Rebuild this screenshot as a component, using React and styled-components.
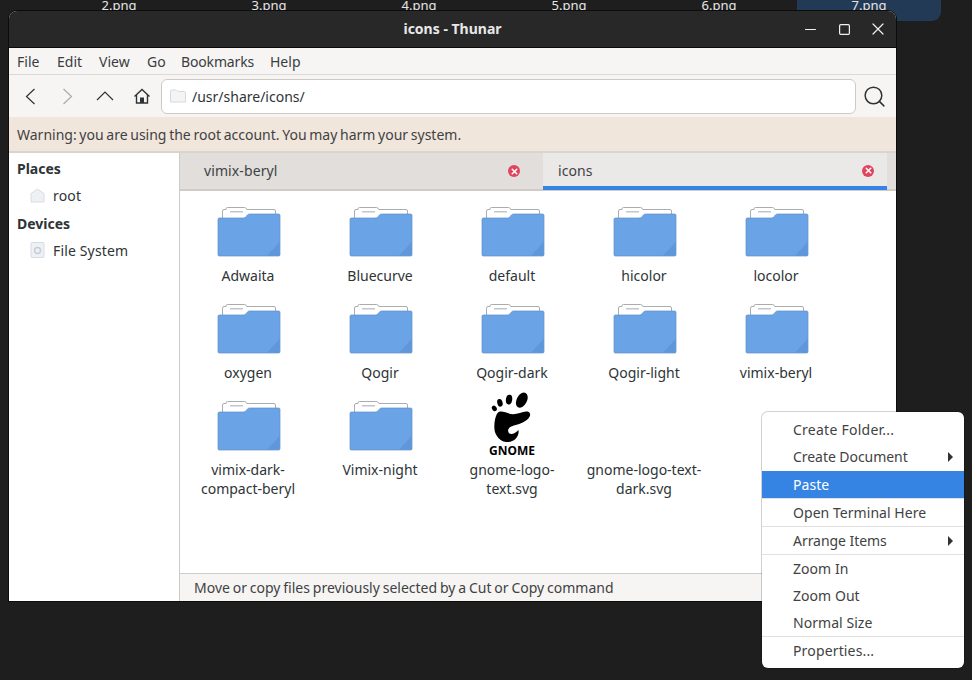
import React from "react";
import styled, { createGlobalStyle } from "styled-components";
import { Search, X, Minus, Square } from "lucide-react";

const Global = createGlobalStyle`
  html, body { margin: 0; padding: 0; background: #1e1e1e; width: 972px; height: 680px; overflow: hidden; }
  body { font-family: "Noto Sans", sans-serif; font-size: 14px; color: #2e3436; }
  * { box-sizing: border-box; }
`;

const Desktop = styled.div`
  position: relative; width: 972px; height: 680px; background: #1e1e1e; overflow: hidden;
`;
const Strip = styled.div`
  display: grid; grid-template-columns: repeat(6, 150px); margin-left: 44px; height: 11px;
`;
const StripLabel = styled.div`
  font-size: 13px; line-height: 16px; text-align: center; color: #e6e6e6; margin-top: -3px; height: 14px; overflow: hidden; position: relative; z-index: 1;
`;
const SelectedTile = styled.div`
  position: absolute; left: 797px; top: -20px; width: 144px; height: 41px; background: #223a56; border-radius: 9px;
`;
const Window = styled.div`
  position: relative; z-index: 2; margin-left: 9px; width: 887px; height: 590px; display: flex; flex-direction: column;
  border-radius: 8px 8px 0 0; overflow: hidden; background: #f6f5f4; box-shadow: 0 0 0 1px #0c0c0c;
`;
const TitleBar = styled.div`
  height: 37px; flex: none; background: #282828; border-bottom: 1px solid #0a0a0a; display: flex; align-items: center; justify-content: center; position: relative; padding-bottom: 2px;
`;
const Title = styled.div`
  color: #e8e8e8; font-weight: 700; font-size: 14px;
`;
const WinControls = styled.div`
  position: absolute; right: 8px; top: 8px; display: flex; gap: 14px; color: #f0f0f0; align-items: center;
`;
const WinBtn = styled.div`
  width: 20px; height: 20px; display: flex; align-items: center; justify-content: center;
`;
const MenuBar = styled.div`
  height: 27px; flex: none; display: flex; align-items: center; padding-left: 8px; background: #f6f5f4; border-bottom: 1px solid #dcdad7; font-size: 14px; color: #3a3d3f;
`;
const MenuLabel = styled.span`
  flex: none; width: ${p => p.$w}px; letter-spacing: ${p => p.$tight ? "-0.15px" : "0"};
`;
const Toolbar = styled.div`
  height: 42px; flex: none; display: flex; align-items: center; background: #f6f5f4; padding-left: 3px;
`;
const ToolBtn = styled.div`
  width: 37px; height: 24px; display: flex; align-items: center; justify-content: center; flex: none;
`;
const Path = styled.div`
  flex: none; width: 695px; height: 35px; margin-left: 1px; background: #fff; border: 1px solid #cdc9c5; border-radius: 6px; display: flex; align-items: center; gap: 6px; padding-left: 8px; font-size: 14px; color: #2e3436;
`;
const SearchBtn = styled.div`
  flex: 1; display: flex; align-items: center; justify-content: center; color: #2e3436; padding-right: 4px;
`;
const Warning = styled.div`
  height: 36px; flex: none; background: #f1e6db; border-bottom: 2px solid #d8d4cf; display: flex; align-items: center; padding-left: 8px; font-size: 14px; color: #3f4243; word-spacing: -0.95px;
`;
const Body = styled.div`
  flex: 1; display: flex; min-height: 0; background: #fff;
`;
const Sidebar = styled.div`
  width: 171px; flex: none; border-right: 1px solid #cfccc8; background: #fff; padding: 6px 8px; font-size: 14px;
`;
const SideHead = styled.div`
  font-weight: 700; height: 20px; line-height: 20px; color: #2e3436;
`;
const SideRow = styled.div`
  height: 35px; display: flex; align-items: center; gap: 8px; padding-left: 13px; padding-bottom: 3px; color: #2e3436; letter-spacing: 0.15px;
`;
const Main = styled.div`
  flex: 1; display: flex; flex-direction: column; min-width: 0;
`;
const Tabs = styled.div`
  height: 38px; flex: none; display: flex; background: #e1dedb; border-bottom: 2px solid #cfccc8;
`;
const Tab = styled.div`
  width: ${p => p.$active ? "344px" : "363px"}; height: ${p => p.$active ? "37px" : "36px"}; flex: none; display: flex; align-items: center; justify-content: space-between;
  padding: 0 ${p => p.$active ? "13px" : "23px"} 0 ${p => p.$active ? "15px" : "24px"}; font-size: 14px; color: #3f4243;
  background: ${p => p.$active ? "#ebe8e8" : "#e1dedb"};
  border-bottom: ${p => p.$active ? "4px solid #3584e4" : "none"};
  padding-top: ${p => p.$active ? "2px" : "0"};
  letter-spacing: 0.1px;
`;
const TabLabel = styled.span`
  position: relative; top: ${p => p.$raise ? "-1px" : "0"};
`;
const CloseDot = styled.span`
  width: 12px; height: 12px; border-radius: 50%; background: #e0455f; display: flex; align-items: center; justify-content: center; color: #fff;
`;
const Files = styled.div`
  flex: 1; display: grid; grid-template-columns: repeat(5, 132px); grid-auto-rows: 97px; padding: 16px 0 0 2px; align-content: start; background: #fff;
`;
const Cell = styled.div`
  display: flex; flex-direction: column; align-items: center; font-size: 14px; line-height: 19px; text-align: center; color: #2e3436;
`;
const IconBox = styled.div`
  width: 64px; height: 51px; flex: none; margin: -1px 0 9px 2px; display: flex; justify-content: center;
`;
const CellName = styled.div`
  width: 116px;
`;
const GnomeMark = styled.div`
  height: 66px; margin-top: -9px; flex: none; display: flex; flex-direction: column; align-items: center; margin-bottom: 2px;
`;
const GnomeWord = styled.div`
  font-family: "Noto Sans", sans-serif; font-weight: 700; font-size: 12px; line-height: 14px; color: #000; margin-top: 1px;
`;
const EmptyMark = styled.div`
  height: 66px; margin-top: -9px; flex: none; margin-bottom: 2px;
`;
const StatusBar = styled.div`
  height: 28px; flex: none; background: #f6f5f4; border-top: 1px solid #cfccc8; display: flex; align-items: center; padding-left: 14px; font-size: 14px; color: #3f4243; word-spacing: -0.8px;
`;
const ContextMenu = styled.div`
  position: absolute; z-index: 5; left: 762px; top: 412px; width: 202px; height: 256px; background: #fff; border-radius: 6px; padding: 5px 0 4px; box-shadow: 0 0 0 1px rgba(0,0,0,0.18); font-size: 14px; color: #3f4243;
`;
const MenuItem = styled.div`
  height: 27px; padding: 0 11px ${p => p.$up ? "2px" : "0"} 31px; display: flex; align-items: center; justify-content: space-between;
  background: ${p => p.$active ? "#3584e4" : "transparent"}; color: ${p => p.$active ? "#fff" : "#3f4243"};
`;
const MenuText = styled.span`
  letter-spacing: ${p => p.$spacing || "0.05px"};
`;
const MenuSep = styled.div`
  height: 1px; background: #e3e1df;
`;
const Arrow = styled.span`
  width: 0; height: 0; border-left: 5px solid #2e3436; border-top: 5px solid transparent; border-bottom: 5px solid transparent;
`;

const FolderIcon = () => (
  <svg width="64" height="51" viewBox="0 0 64 51">
    <path d="M5.500 14V5a1.500 1.500 0 0 1 1.500-1.500h2V3a1.500 1.500 0 0 1 1.500-1.500h17a2 2 0 0 1 2 1.500l.3.500h27.200a1.500 1.500 0 0 1 1.500 1.500V14z" fill="#fff" stroke="#a9adb0" />
    <rect x="13" y="5" width="13" height="1.500" fill="#c3c6c8" />
    <path d="M2.500 12H26c2 0 3-1 4-2.500s2-1.500 4-1.500h27.500c1 0 1.500.5 1.500 1.500v39c0 1-.5 1.500-1.500 1.500H2.500c-1 0-1.500-.5-1.500-1.500V13.500c0-1 .5-1.500 1.500-1.500z" fill="#6aa3e6" stroke="#5f90c8" strokeWidth="0.7" />
    <path d="M62.700 36v13c0 .7-.6 .8-1.500 .8H50z" fill="#5f97da" />
  </svg>
);

const FootIcon = () => (
  <svg width="46" height="52" viewBox="0 0 46 52">
    <ellipse cx="33" cy="8.300" rx="5.200" ry="8.300" transform="rotate(28 33 8.300)" fill="#000" />
    <ellipse cx="20" cy="7.700" rx="3.200" ry="5" transform="rotate(8 20 7.700)" fill="#000" />
    <ellipse cx="10.700" cy="11" rx="2.700" ry="4" transform="rotate(-15 10.700 11)" fill="#000" />
    <ellipse cx="5" cy="16.700" rx="2.300" ry="3" transform="rotate(-35 5 16.700)" fill="#000" />
    <path d="M10.700 20C15 19.500 20 22.500 24 22.700C29 22.800 35 19 39 20C41.500 20.800 42 23 41 25C39.500 28 37 29.500 34 31C30 33 25.500 33.500 22.300 35.300C20 36.500 18.800 38 19 39.500C19.300 42 21 43 22.800 42.700C25.500 42.300 28 40.500 29.700 38.700C30 42 29.300 45 27 47.500C24.500 50 21 51.300 17.300 51C13 50.700 9.500 48 7.300 44.300C5.300 41 4.800 37.500 5 34.300C5.300 28 7 20.500 10.700 20Z" fill="#000" />
  </svg>
);

const NavChevron = ({ d, w, h, color }) => (
  <svg width={w} height={h} viewBox={`0 0 ${w} ${h}`} fill="none" stroke={color} strokeWidth="1.200">
    <path d={d} />
  </svg>
);

const HomeIcon = () => (
  <svg width="18" height="18" viewBox="0 0 18 18" fill="none" stroke="#2e3436" strokeWidth="1.400">
    <path d="M1.500 9.500L9 2.500l7.500 7" />
    <path d="M3.500 8V16h11V8" />
    <rect x="7" y="10.500" width="4" height="5.500" fill="#2e3436" stroke="none" />
  </svg>
);

const PathFolder = () => (
  <svg width="16" height="14" viewBox="0 0 16 14">
    <path d="M1.500 1h5l1.500 1.500h6.500a1 1 0 0 1 1 1V13H.5V2a1 1 0 0 1 1-1z" fill="#f3f4f5" stroke="#d7dadd" />
  </svg>
);

const RootIcon = () => (
  <svg width="15" height="15" viewBox="0 0 15 15">
    <path d="M7.500 1L14 5.500V14H1V5.500z" fill="#eef1f4" stroke="#d8dde2" />
  </svg>
);

const DiskIcon = () => (
  <svg width="15" height="16" viewBox="0 0 15 16">
    <rect x="1" y=".5" width="13" height="15" rx="1" fill="#eef1f4" stroke="#d5dbe3" />
    <circle cx="7.500" cy="8.500" r="3" fill="none" stroke="#c4ccd6" strokeWidth="1.500" />
  </svg>
);

const TabClose = () => (
  <CloseDot><X size={9} strokeWidth={1.500} absoluteStrokeWidth /></CloseDot>
);

const folders = ["Adwaita", "Bluecurve", "default", "hicolor", "locolor", "oxygen", "Qogir", "Qogir-dark", "Qogir-light", "vimix-beryl", "vimix-dark-compact-beryl", "Vimix-night"];

export default function App() {
  return (
    <Desktop>
      <Global />
      <SelectedTile />
      <Strip>
        {["2.png", "3.png", "4.png", "5.png", "6.png", "7.png"].map(n => <StripLabel key={n}>{n}</StripLabel>)}
      </Strip>
      <Window>
        <TitleBar>
          <Title>icons - Thunar</Title>
          <WinControls>
            <WinBtn><Minus size={17} strokeWidth={1.200} absoluteStrokeWidth /></WinBtn>
            <WinBtn><Square size={13} strokeWidth={1.200} absoluteStrokeWidth /></WinBtn>
            <WinBtn><X size={20} strokeWidth={1.200} absoluteStrokeWidth /></WinBtn>
          </WinControls>
        </TitleBar>
        <MenuBar>
          <MenuLabel $w={40}>File</MenuLabel>
          <MenuLabel $w={42}>Edit</MenuLabel>
          <MenuLabel $w={48}>View</MenuLabel>
          <MenuLabel $w={34}>Go</MenuLabel>
          <MenuLabel $w={89} $tight>Bookmarks</MenuLabel>
          <MenuLabel $w={40}>Help</MenuLabel>
        </MenuBar>
        <Toolbar>
          <ToolBtn><NavChevron w={11} h={17} d="M9.500 1L1.500 8.500L9.500 16" color="#2e3436" /></ToolBtn>
          <ToolBtn><NavChevron w={11} h={17} d="M1.500 1L9.500 8.500L1.500 16" color="#a9abac" /></ToolBtn>
          <ToolBtn><NavChevron w={18} h={10} d="M1 9L9 1L17 9" color="#2e3436" /></ToolBtn>
          <ToolBtn><HomeIcon /></ToolBtn>
          <Path><PathFolder /><span>/usr/share/icons/</span></Path>
          <SearchBtn><Search size={25} strokeWidth={1.500} absoluteStrokeWidth /></SearchBtn>
        </Toolbar>
        <Warning>Warning: you are using the root account. You may harm your system.</Warning>
        <Body>
          <Sidebar>
            <SideHead>Places</SideHead>
            <SideRow><RootIcon /><span>root</span></SideRow>
            <SideHead>Devices</SideHead>
            <SideRow><DiskIcon /><span>File System</span></SideRow>
          </Sidebar>
          <Main>
            <Tabs>
              <Tab><TabLabel $raise>vimix-beryl</TabLabel><TabClose /></Tab>
              <Tab $active><TabLabel>icons</TabLabel><TabClose /></Tab>
            </Tabs>
            <Files>
              {folders.map(f => (
                <Cell key={f}>
                  <IconBox><FolderIcon /></IconBox>
                  <CellName>{f}</CellName>
                </Cell>
              ))}
              <Cell>
                <GnomeMark><FootIcon /><GnomeWord>GNOME</GnomeWord></GnomeMark>
                <CellName>gnome-logo-text.svg</CellName>
              </Cell>
              <Cell>
                <EmptyMark />
                <CellName>gnome-logo-text-dark.svg</CellName>
              </Cell>
            </Files>
            <StatusBar>Move or copy files previously selected by a Cut or Copy command</StatusBar>
          </Main>
        </Body>
      </Window>
      <ContextMenu>
        <MenuItem $up><MenuText $spacing="0.25px">Create Folder...</MenuText></MenuItem>
        <MenuItem $up><MenuText $spacing="-0.05px">Create Document</MenuText><Arrow /></MenuItem>
        <MenuItem $active><MenuText>Paste</MenuText></MenuItem>
        <MenuSep />
        <MenuItem><MenuText>Open Terminal Here</MenuText></MenuItem>
        <MenuSep />
        <MenuItem><MenuText $spacing="-0.05px">Arrange Items</MenuText><Arrow /></MenuItem>
        <MenuSep />
        <MenuItem><MenuText>Zoom In</MenuText></MenuItem>
        <MenuItem><MenuText>Zoom Out</MenuText></MenuItem>
        <MenuItem><MenuText>Normal Size</MenuText></MenuItem>
        <MenuSep />
        <MenuItem><MenuText $spacing="0.15px">Properties...</MenuText></MenuItem>
      </ContextMenu>
    </Desktop>
  );
}
